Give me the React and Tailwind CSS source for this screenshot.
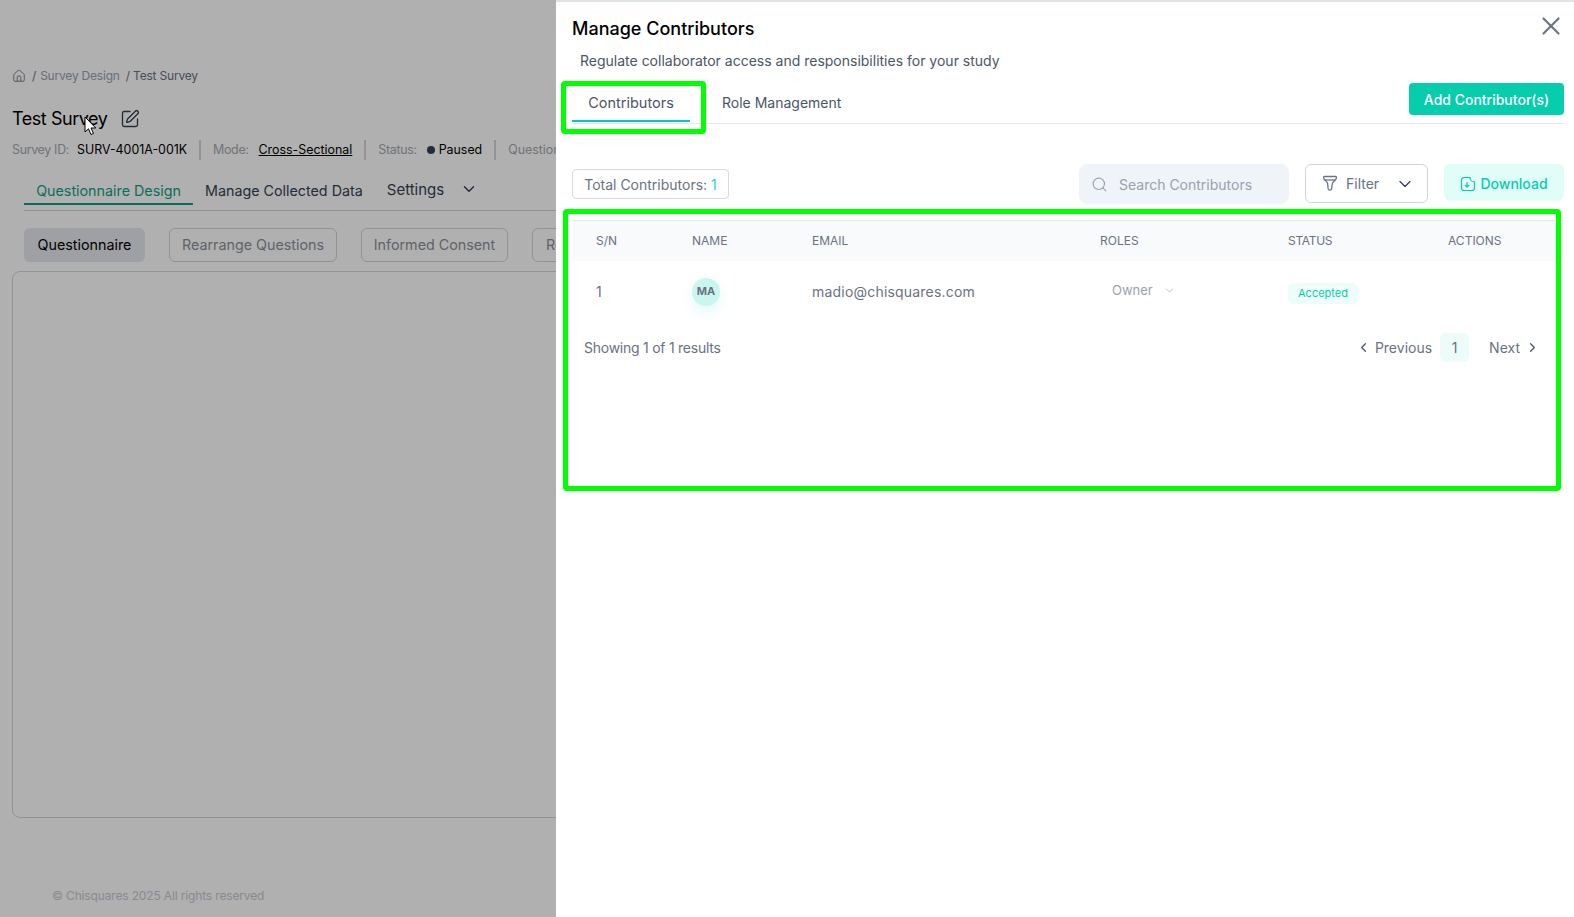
import React from "react";
import { ChevronDown, ChevronLeft, ChevronRight, House, Search, SquarePen, X } from "lucide-react";

const pageTabs = [
  { label: "Rearrange Questions", width: "w-[168px] justify-center" },
  { label: "Informed Consent", width: "w-[147px] justify-center" },
  { label: "Re", width: "w-[60px] pl-[13px]" },
];

function Separator() {
  return <span className="mx-3 h-5 w-0.5 shrink-0 bg-gray-300" />;
}

function BackgroundPage() {
  return (
    <div className="flex h-[917px] w-[556px] flex-col overflow-hidden pl-3 text-gray-700">
      <div className="mt-[68px] flex h-4 items-center gap-1 text-xs tracking-[-0.2px] text-gray-400">
        <House size={14} strokeWidth={1.5} className="text-gray-500" />
        <span className="ml-0.5 text-gray-500">/</span>
        <span>Survey Design</span>
        <span className="ml-0.5 text-gray-500">/ Test Survey</span>
      </div>
      <div className="mt-[21px] flex h-7 items-center gap-[13px]">
        <h1 className="text-lg leading-7 tracking-tight text-black">Test Survey</h1>
        <SquarePen size={20} strokeWidth={1.6} className="text-gray-700" />
      </div>
      <div className="mt-[5px] flex h-6 items-center whitespace-nowrap text-[12.4px]">
        <span className="mr-2 tracking-tight text-[#a3a8b0]">Survey ID:</span>
        <span className="text-black">SURV-4001A-001K</span>
        <Separator />
        <span className="mr-2.5 tracking-tight text-[#a3a8b0]">Mode:</span>
        <span className="text-black underline">Cross-Sectional</span>
        <Separator />
        <span className="mr-2.5 tracking-tight text-[#a3a8b0]">Status:</span>
        <span className="mr-1 h-2 w-2 shrink-0 rounded-full bg-gray-700" />
        <span className="text-black">Paused</span>
        <Separator />
        <span className="text-[#a3a8b0]">Questionnaire</span>
      </div>
      <div className="ml-3 mt-[14px] flex h-[35px] w-[600px] shrink-0 items-start border-b border-gray-300 text-[14.3px] whitespace-nowrap">
        <span className="flex h-[29px] w-[169px] items-center justify-center border-b-2 border-[#0f9f87] pt-0.5 text-[#0f9f87]">
          Questionnaire Design
        </span>
        <span className="ml-3 h-[29px] leading-[30px]">Manage Collected Data</span>
        <span className="ml-6 h-[29px] text-[15px] leading-[27px]">Settings</span>
        <ChevronDown size={18} className="ml-4 mt-1" />
      </div>
      <div className="ml-3 mt-[17px] flex w-[600px] shrink-0 gap-6 text-[14.3px] whitespace-nowrap">
        <span className="flex h-[34px] w-[121px] items-center justify-center rounded-md bg-[#e6e8ee] text-black">Questionnaire</span>
        {pageTabs.map((t) => (
          <span key={t.label} className={`flex h-[34px] items-center rounded-md border border-gray-300 text-[#8a8f98] ${t.width}`}>
            {t.label}
          </span>
        ))}
      </div>
      <div className="mt-[9px] h-[547px] w-[600px] shrink-0 rounded-lg border border-gray-300" />
      <p className="ml-10 mt-[70px] text-xs tracking-[-0.15px] text-[#c4c9d2]">© Chisquares 2025 All rights reserved</p>
    </div>
  );
}

function DownloadIcon() {
  return (
    <svg width="16" height="16" viewBox="0 0 16 16" fill="none" stroke="currentColor" strokeWidth="1.2" strokeLinecap="round" strokeLinejoin="round">
      <path d="M10 1.500H4a2.500 2.500 0 0 0-2.500 2.500v8A2.500 2.500 0 0 0 4 14.500h8a2.500 2.500 0 0 0 2.500-2.500V6" />
      <path d="M10 1.500c0 2.500 2 4.500 4.500 4.500" />
      <path d="M7 6.500v4.500M5.200 9.400 7 11.200l1.800-1.800" />
    </svg>
  );
}

function FilterIcon() {
  return (
    <svg width="16" height="17" viewBox="0 0 16 17" fill="none" stroke="currentColor" strokeWidth="1.3" strokeLinejoin="round">
      <path d="M1.500 2.500c0-.6.4-1 1-1h11c.6 0 1 .4 1 1 0 2.400-3.400 4-4 5.500-.4 1.200-.6 4-1 6-.2 1-2.800 1.600-3.200.4-.4-1.400-.4-4.600-.8-6.400C5 6.500 1.500 4.900 1.500 2.500Z" />
      <path d="M2.500 5h11" />
    </svg>
  );
}

function ContributorsTable() {
  return (
    <table className="w-[992px] table-fixed border-t border-gray-200 text-left">
      <thead className="bg-[#f9fafb] text-xs text-gray-500">
        <tr className="h-10">
          <th className="w-24 pl-6 font-normal">S/N</th>
          <th className="w-[120px] pl-6 font-normal">NAME</th>
          <th className="w-[288px] pl-6 font-normal">EMAIL</th>
          <th className="w-[188px] pl-6 font-normal">ROLES</th>
          <th className="w-40 pl-6 font-normal tracking-tight">STATUS</th>
          <th className="pl-6 font-normal">ACTIONS</th>
        </tr>
      </thead>
      <tbody>
        <tr className="h-[62px] text-sm text-gray-500">
          <td className="pl-6">1</td>
          <td className="pl-6">
            <span className="flex h-7 w-7 items-center justify-center rounded-full bg-[#c9f7f0] text-[11px] font-bold shadow-[0_6px_14px_rgba(6,205,171,0.12)]">
              MA
            </span>
          </td>
          <td className="pl-6 tracking-[0.2px]">madio@chisquares.com</td>
          <td className="pl-9">
            <span className="-mt-0.5 flex items-center gap-2.5 text-[13px] text-gray-400">
              Owner <ChevronDown size={13} strokeWidth={1.2} />
            </span>
          </td>
          <td className="pl-6">
            <span className="mt-1 inline-block h-[21px] w-[70px] rounded-md bg-[#ecfdfa] text-center text-[11px] leading-[21px] text-[#06cdab]">
              Accepted
            </span>
          </td>
          <td />
        </tr>
      </tbody>
    </table>
  );
}

function ContributorsPanel() {
  return (
    <aside className="absolute right-0 top-0 flex h-[917px] w-[1018px] flex-col border-t-2 border-[#dfe5e5] bg-white px-4 text-gray-600">
      <div className="flex items-start justify-between">
        <h2 className="mt-4 text-lg leading-[22px] font-medium text-black">Manage Contributors</h2>
        <button className="-mr-2 mt-[9px] text-gray-500">
          <X size={30} strokeWidth={1.7} />
        </button>
      </div>
      <p className="ml-2 mt-[11px] text-sm leading-[18px] text-gray-600">Regulate collaborator access and responsibilities for your study</p>
      <div className="mt-[13px] flex h-[41px] w-[992px] items-start justify-between border-b border-gray-200 text-sm">
        <div className="flex">
          <span className="flex h-[39px] w-[118px] items-center justify-center border-b-2 border-[#06c9bd] pt-1 text-[14.5px] text-gray-600">Contributors</span>
          <span className="ml-[32px] flex h-[39px] items-center text-gray-600">Role Management</span>
        </div>
        <button className="h-8 w-[155px] rounded bg-[#06cdab] pt-px text-sm font-medium text-white">Add Contributor(s)</button>
      </div>
      <div className="mt-10 flex w-[992px] items-start">
        <div className="mt-[5px] flex h-[30px] w-[157px] items-center justify-center rounded border border-[#d5d9e5] pt-px text-sm text-gray-500">
          <span>
            Total Contributors: <span className="text-[#2fd3ba]">1</span>
          </span>
        </div>
        <div className="ml-auto flex h-10 w-[210px] items-center gap-[11px] rounded-lg bg-[#f0f3f8] pl-3 pt-px text-sm text-gray-400">
          <Search size={17} strokeWidth={1.6} />
          <span>Search Contributors</span>
        </div>
        <div className="ml-4 flex h-[39px] w-[123px] items-center rounded-md border border-[#d0d5dd] pl-4 text-sm text-gray-500">
          <FilterIcon />
          <span className="ml-2">Filter</span>
          <ChevronDown size={20} strokeWidth={1.6} className="ml-4 text-gray-700" />
        </div>
        <div className="ml-4 flex h-[37px] w-[120px] items-center justify-center gap-1 rounded-md bg-[#e0fdf8] pt-0.5 text-sm font-medium text-[#06cdab]">
          <DownloadIcon />
          <span>Download</span>
        </div>
      </div>
      <div className="mt-4">
        <ContributorsTable />
      </div>
      <div className="mt-2.5 flex h-[30px] w-[992px] items-center pl-3 pr-6 text-sm text-gray-500">
        <span className="tracking-[-0.25px]">Showing 1 of 1 results</span>
        <div className="ml-auto flex items-center">
          <ChevronLeft size={15} className="mr-1 text-gray-600" />
          <span>Previous</span>
          <span className="ml-2 flex h-[29px] w-[29px] items-center justify-center rounded-md bg-[#edfcf9]">1</span>
          <span className="ml-5">Next</span>
          <ChevronRight size={15} className="ml-[5px] text-gray-600" />
        </div>
      </div>
    </aside>
  );
}

export default function App() {
  return (
    <div className="relative h-[917px] w-full overflow-hidden bg-white font-['Inter',sans-serif]">
      <BackgroundPage />
      {/* dim layer behind the drawer */}
      <div className="absolute inset-0 bg-black/[0.31]" />
      {/* mouse cursor */}
      <svg className="absolute left-[84px] top-[116px]" width="13" height="20" viewBox="0 0 13 20">
        <path d="M1 1v15l3.500-3.200L7 18.500l2.500-1-2.500-5.500h4.800Z" fill="#fff" stroke="#000" strokeWidth="1" />
      </svg>
      <ContributorsPanel />
      {/* review highlights */}
      <div className="absolute left-[561px] top-[81px] h-[53px] w-[145px] rounded-sm border-[5px] border-[#00ff00]" />
      <div className="absolute left-[563px] top-[209px] h-[282px] w-[998px] rounded-sm border-[5px] border-[#00ff00]" />
    </div>
  );
}
